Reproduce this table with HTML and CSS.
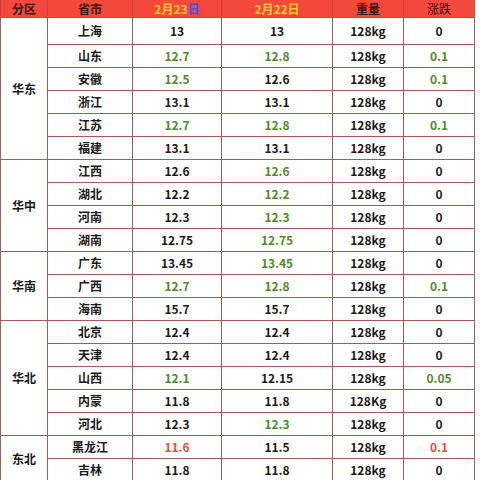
FILE: index.html
```html
<!DOCTYPE html>
<html lang="zh-CN">
<head>
<meta charset="utf-8">
<title>生猪价格</title>
<link rel="stylesheet" href="styles.css">
</head>
<body>
<table class="price">
  <colgroup>
    <col class="c-area"><col class="c-prov"><col class="c-d1"><col class="c-d2"><col class="c-w"><col class="c-ch">
  </colgroup>
  <thead>
    <tr class="head">
      <th class="dark">分区</th>
      <th class="dark">省市</th>
      <th class="gold">2月23<span class="blue">日</span></th>
      <th class="gold">2月22日</th>
      <th class="dark">重量</th>
      <th class="dark thin">涨跌</th>
    </tr>
  </thead>
  <tbody>
    <tr class="first"><td class="area" rowspan="6">华东</td><td>上海</td><td>13</td><td>13</td><td>128kg</td><td>0</td></tr>
    <tr><td>山东</td><td class="g">12.7</td><td class="g">12.8</td><td>128kg</td><td class="g">0.1</td></tr>
    <tr><td>安徽</td><td class="g">12.5</td><td>12.6</td><td>128kg</td><td class="g">0.1</td></tr>
    <tr><td>浙江</td><td>13.1</td><td>13.1</td><td>128kg</td><td>0</td></tr>
    <tr><td>江苏</td><td class="g">12.7</td><td class="g">12.8</td><td>128kg</td><td class="g">0.1</td></tr>
    <tr><td>福建</td><td>13.1</td><td>13.1</td><td>128kg</td><td>0</td></tr>

    <tr><td class="area" rowspan="4">华中</td><td>江西</td><td>12.6</td><td class="g">12.6</td><td>128kg</td><td>0</td></tr>
    <tr><td>湖北</td><td>12.2</td><td class="g">12.2</td><td>128kg</td><td>0</td></tr>
    <tr><td>河南</td><td>12.3</td><td class="g">12.3</td><td>128kg</td><td>0</td></tr>
    <tr><td>湖南</td><td>12.75</td><td class="g">12.75</td><td>128kg</td><td>0</td></tr>

    <tr><td class="area" rowspan="3">华南</td><td>广东</td><td>13.45</td><td class="g">13.45</td><td>128kg</td><td>0</td></tr>
    <tr><td>广西</td><td class="g">12.7</td><td class="g">12.8</td><td>128kg</td><td class="g">0.1</td></tr>
    <tr><td>海南</td><td>15.7</td><td>15.7</td><td>128kg</td><td>0</td></tr>

    <tr><td class="area" rowspan="5">华北</td><td>北京</td><td>12.4</td><td>12.4</td><td>128kg</td><td>0</td></tr>
    <tr><td>天津</td><td>12.4</td><td>12.4</td><td>128kg</td><td>0</td></tr>
    <tr><td>山西</td><td class="g">12.1</td><td>12.15</td><td>128kg</td><td class="g">0.05</td></tr>
    <tr><td>内蒙</td><td>11.8</td><td>11.8</td><td>128Kg</td><td>0</td></tr>
    <tr><td>河北</td><td>12.3</td><td class="g">12.3</td><td>128kg</td><td>0</td></tr>

    <tr><td class="area" rowspan="2">东北</td><td>黑龙江</td><td class="r">11.6</td><td>11.5</td><td>128kg</td><td class="r">0.1</td></tr>
    <tr><td>吉林</td><td>11.8</td><td>11.8</td><td>128kg</td><td>0</td></tr>
  </tbody>
</table>
</body>
</html>
```
FILE: styles.css
```css
html, body {
  margin: 0;
  padding: 0;
  background: #ffffff;
}

body {
  font-family: "Noto Sans CJK SC", "Noto Sans", sans-serif;
  font-size: 12px;
  color: #1a1a1a;
}

.price {
  border-collapse: collapse;
  table-layout: fixed;
  width: 474px;
}

.c-area { width: 47px; }
.c-prov { width: 85px; }
.c-d1 { width: 89px; }
.c-d2 { width: 111px; }
.c-w { width: 71px; }
.c-ch { width: 71px; }

.price th,
.price td {
  border: 1px solid #a85a5a;
  padding: 0;
  text-align: center;
  vertical-align: middle;
  font-weight: 700;
  line-height: 14px;
  white-space: nowrap;
}

.head th {
  background: #f5483c;
  height: 17px;
  border-color: #c8453c;
  border-top: none;
}

.head th.dark { color: #3a1414; }
.head th.thin { font-weight: 400; }
.head th.gold { color: #ffc52a; }
.blue { color: #4b4fe0; }

.price td { height: 22px; }
.first td { height: 26px; }

.g { color: #4f8a2b; }
.r { color: #ea4a40; }
```
